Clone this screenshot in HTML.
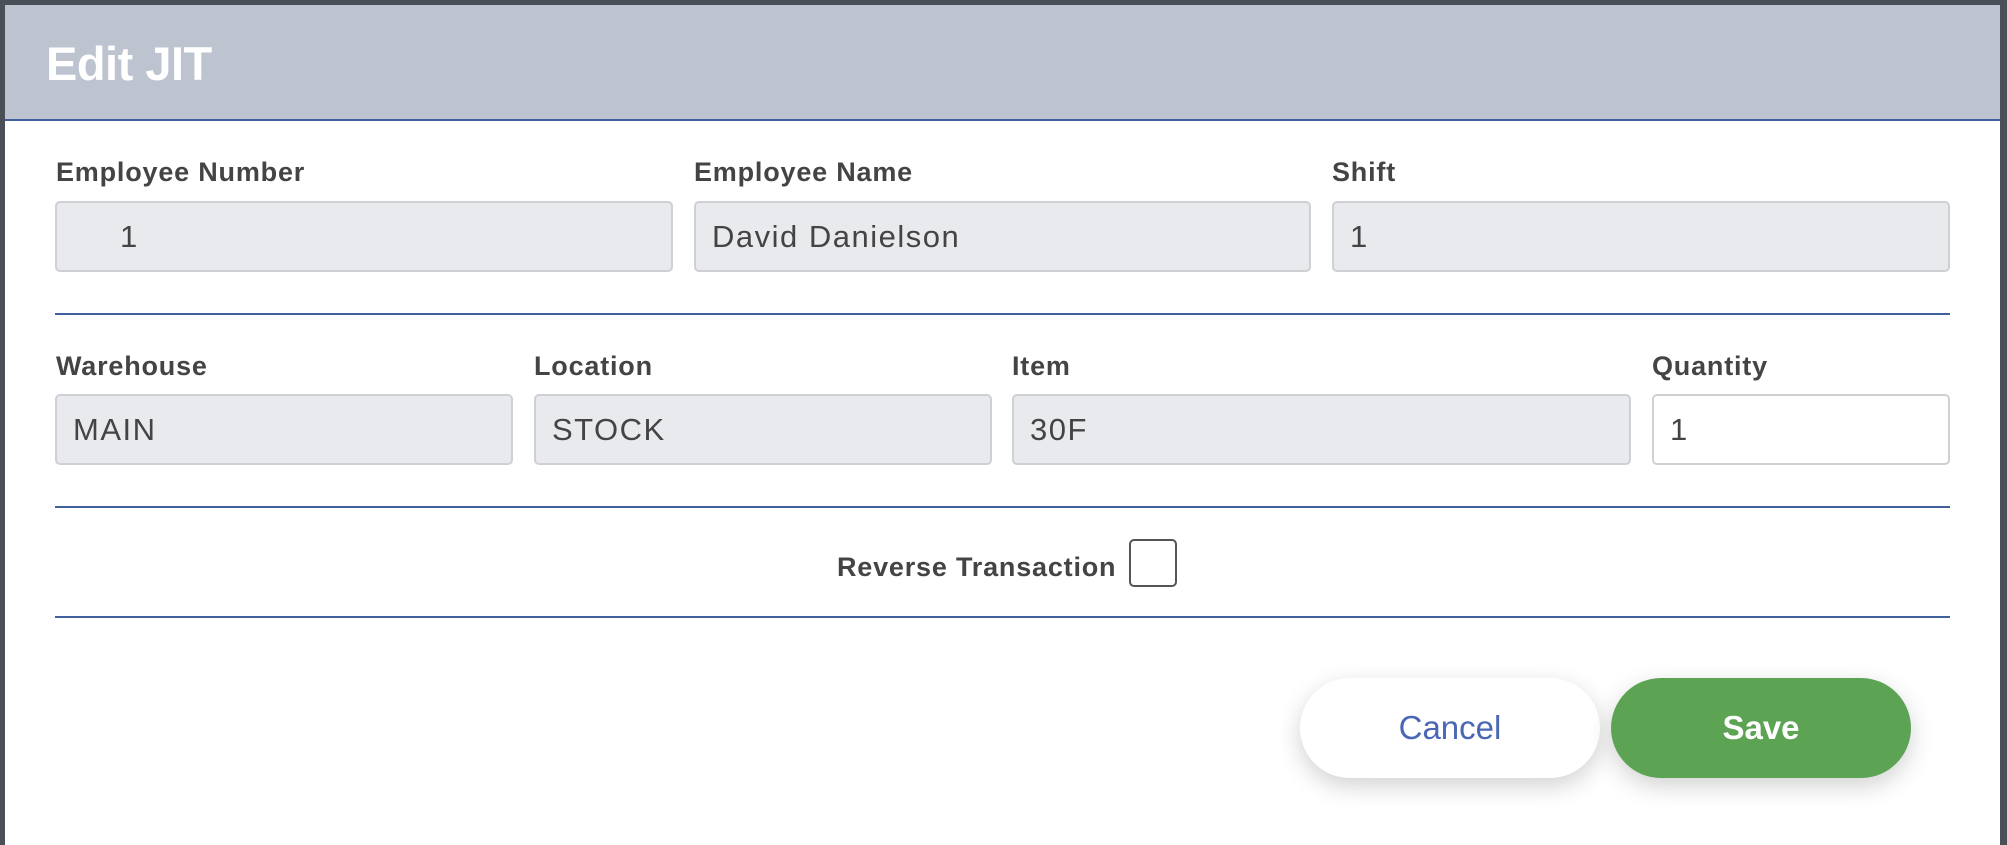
<!DOCTYPE html>
<html><head><meta charset="utf-8"><style>
html,body{margin:0;padding:0;}
body{width:2007px;height:838px;background:#4a4f58;position:relative;overflow:hidden;font-family:"Liberation Sans",sans-serif;}
.dlg{position:absolute;left:5px;top:5px;width:1995px;height:840px;background:#fff;}
.hdr{position:absolute;left:0;top:0;width:1995px;height:114px;background:#bdc4d0;border-bottom:2px solid #3f5f9e;}
.hdr span{position:absolute;left:41px;top:34px;font-size:47px;font-weight:bold;color:#fff;line-height:50px;letter-spacing:-0.5px;}
.lbl{position:absolute;font-size:27px;color:#444;font-weight:bold;line-height:30px;letter-spacing:0.8px;}
.in{position:absolute;box-sizing:border-box;height:71px;background:#e9eaed;border:2px solid #cfd0d3;border-radius:5px;font-size:31px;color:#444;line-height:67px;padding-left:16px;letter-spacing:1.5px;}
.w{background:#fff;}
.ln{position:absolute;left:50px;width:1895px;height:2px;background:#3f5f9e;}
.btn{position:absolute;top:673px;height:100px;width:300px;border-radius:50px;font-size:33px;text-align:center;line-height:100px;box-shadow:0 8px 24px rgba(0,0,0,0.18);}
</style></head><body>
<div class="dlg">
<div class="hdr"><span>Edit JIT</span></div>
<div class="lbl" style="left:51px;top:152px">Employee Number</div>
<div class="lbl" style="left:689px;top:152px">Employee Name</div>
<div class="lbl" style="left:1327px;top:152px">Shift</div>
<div class="in" style="left:50px;top:196px;width:618px;padding-left:63px">1</div>
<div class="in" style="left:689px;top:196px;width:617px">David Danielson</div>
<div class="in" style="left:1327px;top:196px;width:618px">1</div>
<div class="ln" style="top:308px"></div>
<div class="lbl" style="left:51px;top:346px">Warehouse</div>
<div class="lbl" style="left:529px;top:346px">Location</div>
<div class="lbl" style="left:1007px;top:346px">Item</div>
<div class="lbl" style="left:1647px;top:346px">Quantity</div>
<div class="in" style="left:50px;top:389px;width:458px">MAIN</div>
<div class="in" style="left:529px;top:389px;width:458px">STOCK</div>
<div class="in" style="left:1007px;top:389px;width:619px">30F</div>
<div class="in w" style="left:1647px;top:389px;width:298px">1</div>
<div class="ln" style="top:501px"></div>
<div class="lbl" style="left:832px;top:547px">Reverse Transaction</div>
<div style="position:absolute;left:1124px;top:534px;width:48px;height:48px;box-sizing:border-box;border:2px solid #555;border-radius:5px;background:#fff"></div>
<div class="ln" style="top:611px"></div>
<div class="btn" style="left:1295px;background:#fff;color:#4a67b5">Cancel</div>
<div class="btn" style="left:1606px;background:#5ca454;color:#fff;font-weight:bold">Save</div>
</div>
</body></html>
